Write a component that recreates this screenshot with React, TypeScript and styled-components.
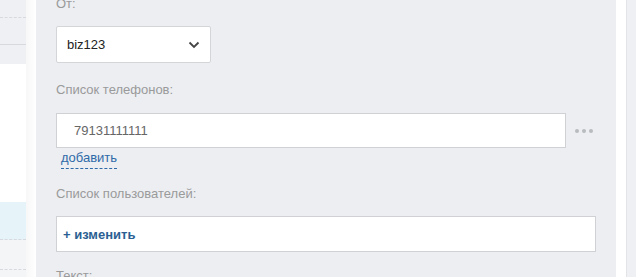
import React from "react";
import styled, { createGlobalStyle } from "styled-components";

const Global = createGlobalStyle`
  html, body { margin: 0; padding: 0; }
  body {
    font-family: Arial, "Liberation Sans", sans-serif;
    font-size: 13px;
    background: #ffffff;
  }
`;

const Page = styled.div`
  display: flex;
  width: 636px;
  height: 277px;
  overflow: hidden;
  background: #ffffff;
`;

const LeftPane = styled.div`
  width: 26px;
  flex: none;
  display: flex;
  flex-direction: column;
  background: #ffffff;
`;

const PaneRow = styled.div<{ $h: number; $bg?: string; $line?: "dashed" | "solid" }>`
  height: ${(p) => p.$h}px;
  flex: none;
  background: ${(p) => p.$bg || "#ffffff"};
  border-bottom: ${(p) => (p.$line ? `1px ${p.$line} #d6d9de` : "none")};
`;

const Gutter = styled.div`
  width: 10px;
  flex: none;
  background: linear-gradient(to right, #f7f7f8, #ffffff);
`;

const Modal = styled.div`
  width: 580px;
  flex: none;
  background: #eceef2;
  padding: 0 20px;
  box-sizing: border-box;
  overflow: hidden;
`;

const Form = styled.div`
  margin-top: -4px;
  display: flex;
  flex-direction: column;
`;

const Label = styled.div<{ $gap: number }>`
  color: #9a9a9a;
  line-height: 16px;
  margin-bottom: ${(p) => p.$gap}px;
`;

const Field = styled.div<{ $after: number }>`
  display: flex;
  flex-direction: column;
  margin-bottom: ${(p) => p.$after}px;
`;

const Select = styled.div`
  width: 155px;
  height: 37px;
  box-sizing: border-box;
  background: #ffffff;
  border: 1px solid #d3d5d9;
  border-radius: 2px;
  display: flex;
  align-items: center;
  justify-content: space-between;
  padding: 0 10px 0 10px;
  color: #222;
`;

const InputRow = styled.div`
  display: flex;
  align-items: center;
`;

const TextInput = styled.div`
  width: 510px;
  height: 35px;
  box-sizing: border-box;
  background: #ffffff;
  border: 1px solid #cfd1d5;
  display: flex;
  align-items: center;
  padding-left: 17px;
  color: #666;
`;

const Dots = styled.div`
  display: flex;
  gap: 3px;
  margin-left: 9px;
`;

const Dot = styled.span`
  width: 4px;
  height: 4px;
  border-radius: 50%;
  background: #b9bbbf;
`;

const AddLink = styled.span`
  align-self: flex-start;
  margin-left: 5px;
  margin-top: 2px;
  color: #2f6aa8;
  line-height: 16px;
  padding-bottom: 2px;
  border-bottom: 1px dashed #2f6aa8;
`;

const Box = styled.div`
  width: 540px;
  height: 36px;
  box-sizing: border-box;
  background: #ffffff;
  border: 1px solid #cfd1d5;
  display: flex;
  align-items: center;
  padding-left: 6px;
  color: #2b5f93;
  font-weight: bold;
`;

const RightGap = styled.div`
  width: 10px;
  flex: none;
  background: #ffffff;
`;

const RightPane = styled.div`
  width: 10px;
  flex: none;
  background: #eef0f3;
  border-left: 1px solid #e2e4e8;
  box-sizing: border-box;
`;

const Chevron = () => (
  <svg width="12" height="8" viewBox="0 0 12 8">
    <path d="M1.5 1.5 L6 6 L10.5 1.5" fill="none" stroke="#444" strokeWidth="1.8" />
  </svg>
);

export default function App() {
  return (
    <>
      <Global />
      <Page>
        <LeftPane>
          <PaneRow $h={17} $bg="#eef0f3" $line="dashed" />
          <PaneRow $h={26} $bg="#eef0f3" $line="solid" />
          <PaneRow $h={19} $bg="#eef0f3" />
          <PaneRow $h={138} />
          <PaneRow $h={37} $bg="#e6f3f8" $line="dashed" />
          <PaneRow $h={29} $bg="#f4f5f7" $line="dashed" />
          <PaneRow $h={20} $bg="#f4f5f7" />
        </LeftPane>
        <Gutter />
        <Modal>
          <Form>
            <Field $after={19}>
              <Label $gap={14}>От:</Label>
              <Select>
                <span>biz123</span>
                <Chevron />
              </Select>
            </Field>
            <Field $after={17}>
              <Label $gap={15}>Список телефонов:</Label>
              <InputRow>
                <TextInput>79131111111</TextInput>
                <Dots>
                  <Dot />
                  <Dot />
                  <Dot />
                </Dots>
              </InputRow>
              <AddLink>добавить</AddLink>
            </Field>
            <Field $after={16}>
              <Label $gap={14}>Список пользователей:</Label>
              <Box>+ изменить</Box>
            </Field>
            <Field $after={0}>
              <Label $gap={0}>Текст:</Label>
            </Field>
          </Form>
        </Modal>
        <RightGap />
        <RightPane />
      </Page>
    </>
  );
}
